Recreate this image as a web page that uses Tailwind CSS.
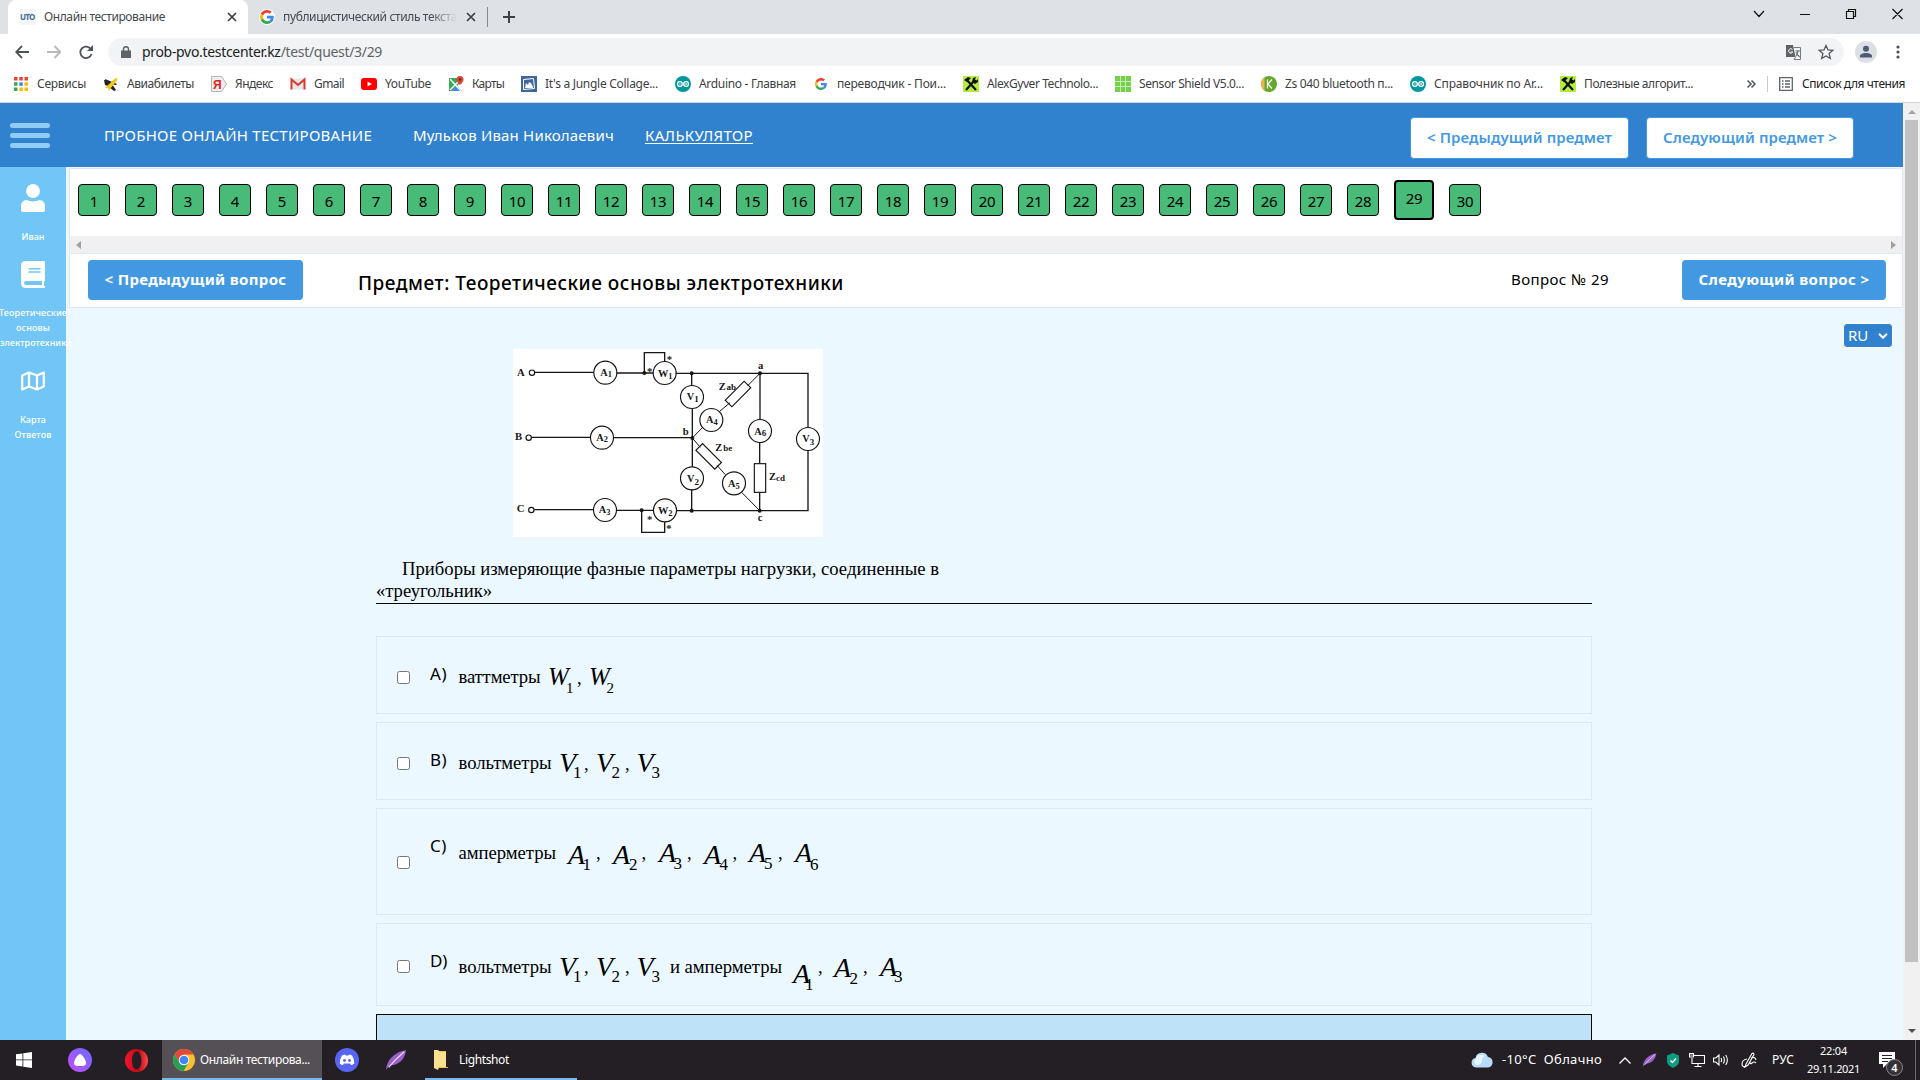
<!DOCTYPE html>
<html lang="ru">
<head>
<meta charset="utf-8">
<title>Онлайн тестирование</title>
<script src="https://cdn.jsdelivr.net/npm/@tailwindcss/browser@4"></script>
</head>
<body class="flex h-[1080px] w-[1920px] flex-col overflow-hidden bg-white font-['Noto_Sans','Open_Sans',sans-serif] text-black">

<svg class="hidden">
  <symbol id="apps" viewBox="0 0 16 16"><g fill="#ea4335"><path d="M1 1h3.500v3.500H1zM6.300 1h3.500v3.500H6.300zM11.500 1H15v3.500h-3.500z"/></g><path fill="#34a853" d="M1 6.300h3.500v3.500H1zM1 11.500h3.500V15H1z"/><path fill="#4285f4" d="M6.300 6.300h3.500v3.500H6.300z"/><path fill="#fbbc05" d="M11.500 6.300H15v3.500h-3.500zM6.300 11.500h3.500V15H6.300zM11.500 11.500H15V15h-3.500z"/></symbol>
  <symbol id="plane" viewBox="0 0 16 16"><path fill="#222" d="M1 4l4 .5L8 7l-3 3-3-1zM9 8l4 6-2 1-5-4z"/><path fill="#222" d="M2 3l12 5-1 1L3 7z"/><path fill="#f5c518" d="M4 10L12 2.500l2.500-.5-.5 2.500L7 13l-2 2 .5-3L2 12z"/></symbol>
  <symbol id="yandex" viewBox="0 0 16 16"><path fill="#eee" stroke="#b5b5b5" d="M.5.5h10L15.500 8l-5 7.500H.5z"/><text x="2" y="12.500" font-size="12" font-weight="bold" font-family="Liberation Sans" fill="#e0201b">Я</text></symbol>
  <symbol id="gmail" viewBox="0 0 16 16"><path fill="#e8e8e8" d="M1 2.500h14v11H1z"/><path fill="none" stroke="#d93a2f" stroke-width="2" d="M1.500 13.500v-10L8 9l6.500-5.500v10"/></symbol>
  <symbol id="youtube" viewBox="0 0 16 16"><rect y="2" width="16" height="12" rx="3" fill="#f00"/><path fill="#fff" d="M6.500 5.500v5L11 8z"/></symbol>
  <symbol id="maps" viewBox="0 0 16 16"><path fill="#34a853" d="M1 2h10v6L4 15H1z"/><path fill="#4285f4" d="M9 9l5 6H4z"/><path stroke="#fff" stroke-width="1.500" d="M2 3l11 12M2 14L11 5"/><path fill="#db4437" d="M12 0a3.500 3.500 0 0 1 3.500 3.500C15.500 6 12 9 12 9S8.500 6 8.500 3.500A3.500 3.500 0 0 1 12 0"/><circle cx="12" cy="3.500" r="1.200" fill="#7b1d14"/></symbol>
  <symbol id="jungle" viewBox="0 0 16 16"><path fill="#3d679c" d="M0 0h16v16H0z"/><path fill="none" stroke="#fff" d="M2.500 3.500l10-1 1 10-11 1z"/><path fill="#fff" d="M4 12l1-5 2 2 1-3 2 1 2 4v1z"/></symbol>
  <symbol id="arduino" viewBox="0 0 16 16"><circle cx="8" cy="8" r="8" fill="#00979d"/><g fill="none" stroke="#fff" stroke-width="1.300"><circle cx="4.900" cy="8" r="2.400"/><circle cx="11.100" cy="8" r="2.400"/></g><path stroke="#fff" stroke-width=".7" d="M4 8h1.800M10.200 8H12M11.100 7v2"/></symbol>
  <symbol id="google" viewBox="0 0 48 48"><path fill="#EA4335" d="M24 9.500c3.540 0 6.710 1.220 9.210 3.600l6.850-6.850C35.900 2.380 30.470 0 24 0 14.620 0 6.510 5.380 2.560 13.220l7.980 6.190C12.430 13.720 17.740 9.500 24 9.500z"/><path fill="#4285F4" d="M46.980 24.550c0-1.570-.15-3.090-.38-4.550H24v9.020h12.940c-.58 2.960-2.260 5.480-4.780 7.180l7.730 6c4.510-4.180 7.090-10.360 7.090-17.650z"/><path fill="#FBBC05" d="M10.530 28.590c-.48-1.450-.76-2.990-.76-4.590s.27-3.140.76-4.590l-7.980-6.190C.92 16.460 0 20.120 0 24s.92 7.540 2.560 10.780l7.970-6.190z"/><path fill="#34A853" d="M24 48c6.480 0 11.930-2.130 15.890-5.810l-7.730-6c-2.150 1.450-4.920 2.300-8.160 2.300-6.260 0-11.570-4.220-13.470-9.910l-7.980 6.190C6.510 42.620 14.620 48 24 48z"/></symbol>
  <symbol id="tools" viewBox="0 0 16 16"><path fill="#b4ee3c" d="M0 0h16v16H0z"/><path fill="none" stroke="#111" stroke-width="2.200" d="M3 14l8-9M3 3l10 11"/><path fill="#111" d="M1 4l4-3 3 1-4 4zM10 2l3-1-1 2.500 1.500 1L15 3v3l-3 2-3-2z"/></symbol>
  <symbol id="grid" viewBox="0 0 16 16"><path fill="#76cf4d" d="M0 0h16v16H0z"/><path stroke="#c8edb6" d="M5.500 0v16M10.500 0v16M0 5.500h16M0 10.500h16"/></symbol>
  <symbol id="kbadge" viewBox="0 0 16 16"><circle cx="8" cy="8" r="8" fill="#66a82c"/><path fill="#f1b24a" d="M3.500 1.500a8 8 0 0 0 0 13z"/><path fill="none" stroke="#fff" stroke-width="1.200" d="M6.500 3.500v9M11 3.500l-4 4.500 4 4.500"/></symbol>
  <symbol id="feather" viewBox="0 0 24 24"><path fill="#9a62c8" d="M1 23c1-8 4-13 10-17 4-3 8-4 12-5-1 6-3 11-8 14-4 3-8 2-11 4z"/><path fill="none" stroke="#ecd8f8" stroke-width="1.300" d="M4 20C9 14 14 9 21 3"/></symbol>
</svg>

<!-- tab strip -->
<div class="flex h-[34px] shrink-0 bg-[#dee1e6] pl-2 text-[12px] text-[#45494d]">
  <div class="flex w-60 items-center rounded-t-lg bg-white pr-[11px] pl-3">
    <div class="flex h-4 w-4 items-center bg-[#f5f5f7]"><span class="text-[8px] leading-none font-bold tracking-[-0.8px] text-[#3f6f9a]">UTO</span></div>
    <span class="ml-2 whitespace-nowrap leading-4" data-fit="121">Онлайн тестирование</span>
    <svg class="ml-auto h-2.5 w-2.5" viewBox="0 0 10 10" stroke="#3c4043" stroke-width="1.700"><path d="M1 1l8 8M9 1l-8 8"/></svg>
  </div>
  <div class="flex w-[239px] items-center pr-[11px] pl-[11px]">
    <span class="flex h-4 w-4 items-center justify-center rounded-full bg-white"><svg class="h-3.5 w-3.5"><use href="#google"/></svg></span>
    <span class="ml-2 w-[174px] overflow-hidden mask-r-from-85% leading-4 whitespace-nowrap"><span data-fit="174">публицистический стиль текста</span></span>
    <svg class="ml-auto h-2.5 w-2.5" viewBox="0 0 10 10" stroke="#3c4043" stroke-width="1.700"><path d="M1 1l8 8M9 1l-8 8"/></svg>
  </div>
  <div class="mt-[7px] h-5 w-px bg-[#85888c]"></div>
  <svg class="mt-[11px] ml-[15px] h-3 w-3" viewBox="0 0 12 12" stroke="#3c4043" stroke-width="2"><path d="M6 0v12M0 6h12"/></svg>
  <svg class="mt-2 mr-[17px] ml-auto h-3 w-[150px]" viewBox="0 0 150 12" fill="none" stroke="#111" stroke-width="1.200"><path d="M1 3l5 5.500L11 3M47 6.500h10M93.500 3.500h7v7h-7zM95.500 3.500v-2h7v7h-2M139.500 1l10 10M149.500 1l-10 10"/></svg>
</div>

<!-- toolbar -->
<div class="flex h-9 shrink-0 items-center pl-[15px]">
  <svg class="h-[14px] w-[80px]" viewBox="0 0 80 14" fill="none" stroke-width="1.800"><path stroke="#4f5358" d="M14 7H1.500M7 1L1.200 7 7 13"/><path stroke="#b6b8bb" d="M32 7h13M39.500 1l5.800 6-5.800 6"/><path stroke="#4f5358" d="M76 4.500A5.700 5.700 0 1 0 76.500 9"/><path fill="#4f5358" stroke="none" d="M78 0v6h-6z"/></svg>
  <div class="ml-[13px] flex h-7 w-[1736px] items-center rounded-full bg-[#f1f3f4] pr-[10px] pl-[13px]">
    <svg class="h-3 w-[10px]" viewBox="0 0 10 12"><path fill="#5f6368" d="M0 4.500h10V12H0z"/><path fill="none" stroke="#5f6368" stroke-width="1.500" d="M2.500 5V3a2.500 2.300 0 0 1 5 0v2"/></svg>
    <span class="ml-[11px] text-[14px] leading-5 whitespace-nowrap text-[#202124]" data-fit="240">prob-pvo.testcenter.kz<span class="text-[#5f6368]">/test/quest/3/29</span></span>
    <svg class="ml-auto h-[15px] w-[15px]" viewBox="0 0 15 15"><path fill="#5f6368" d="M0 0h7l2.500 12H0z"/><path fill="none" stroke="#777b80" d="M8 2.500h6.500v12H8l2-3"/><path stroke="#777b80" d="M9.500 6H14M12 5c0 3-1 5-2 6M10 7c1 3 2 4 4 5"/><path fill="none" stroke="#fff" d="M6.500 4.500a2.200 2.200 0 1 0 .3 2.500H4.500"/></svg>
    <svg class="ml-[17px] h-4 w-4" viewBox="0 0 16 16" fill="none" stroke="#55595e" stroke-width="1.300"><path d="M8 1.500l2 4.500 4.800.4-3.700 3.200 1.200 4.900L8 11.900l-4.300 2.600 1.200-4.900L1.200 6.400 6 6z"/></svg>
  </div>
  <svg class="ml-[11px] h-[22px] w-[22px]" viewBox="0 0 22 22"><circle cx="11" cy="11" r="11" fill="#dcdfe4"/><circle cx="11" cy="7.700" r="3" fill="#4c5b76"/><path fill="#4c5b76" d="M5 16.500v-1.500c0-2 3-3 6-3s6 1 6 3v1.500z"/></svg>
  <svg class="ml-[19px] h-[14px] w-1" viewBox="0 0 4 14" fill="#4f5358"><circle cx="2" cy="2" r="1.600"/><circle cx="2" cy="7" r="1.600"/><circle cx="2" cy="12" r="1.600"/></svg>
</div>

<!-- bookmarks -->
<div class="flex h-[33px] shrink-0 items-center border-b border-[#d5d8dc] pr-[15px] pb-1 pl-[13px] text-[12px] text-[#3c4043]">
  <div id="bookmarks" class="flex items-center gap-[17px]"></div>
  <svg class="ml-auto h-2 w-[9px]" viewBox="0 0 9 8" fill="none" stroke="#4f5358" stroke-width="1.500"><path d="M.5.5L4 4 .5 7.500M4.500.5L8 4 4.500 7.500"/></svg>
  <div class="mx-[11px] h-4 w-px bg-[#c8cbd0]"></div>
  <svg class="h-[14px] w-[14px]" viewBox="0 0 14 14" fill="none" stroke="#5f6368" stroke-width="1.300"><path d="M.7.7h12.600v12.600H.7zM3 4h1.500M3 7h1.500M3 10h1.500M6 4h5M6 7h5M6 10h5"/></svg>
  <span class="ml-[9px] whitespace-nowrap text-[#202124]" data-fit="103">Список для чтения</span>
</div>

<!-- page -->
<div class="flex h-[937px] shrink-0">
  <div class="flex w-[1903px] flex-col bg-[#ebf8ff]">
    <header class="flex h-16 shrink-0 items-center bg-[#3182ce] pr-[49px] pl-[10px] text-[16px] text-white">
      <div class="flex w-10 flex-col gap-[5px]">
        <div class="h-[5px] rounded-sm bg-[#90cdf4]"></div><div class="h-[5px] rounded-sm bg-[#90cdf4]"></div><div class="h-[5px] rounded-sm bg-[#90cdf4]"></div>
      </div>
      <span class="ml-[54px] w-[268px] text-[15px] whitespace-nowrap" data-fit="268">ПРОБНОЕ ОНЛАЙН ТЕСТИРОВАНИЕ</span>
      <span class="ml-[41px] w-[201px] text-[15px] whitespace-nowrap" data-fit="201">Мульков Иван Николаевич</span>
      <a class="ml-[31px] w-[108px] text-[15px] whitespace-nowrap underline underline-offset-2" data-fit="108">КАЛЬКУЛЯТОР</a>
      <button class="mt-[5px] ml-auto flex h-[42px] w-[219px] items-center justify-center rounded border border-[#4299e1] bg-white text-[15px] font-semibold text-[#4299e1]"><span class="whitespace-nowrap" data-fit="185">&lt; Предыдущий предмет</span></button>
      <button class="mt-[5px] ml-[17px] flex h-[42px] w-[208px] items-center justify-center rounded border border-[#4299e1] bg-white text-[15px] font-semibold text-[#4299e1]"><span class="whitespace-nowrap" data-fit="174">Следующий предмет &gt;</span></button>
    </header>

    <div class="flex min-h-0 flex-1">
      <aside class="z-10 flex w-[66px] shrink-0 flex-col items-center bg-[#71c6f7] pt-[17px] text-center text-[9px] leading-[15px] font-medium text-white">
        <svg class="h-7 w-6" viewBox="0 0 24 28" fill="#fff"><circle cx="12" cy="7" r="6.900"/><path d="M6 16c2 1 3.500 1.400 6 1.400s4-.4 6-1.400c4 0 6 3 6 6v4q0 2-2 2H2q-2 0-2-2v-4c0-3 2-6 6-6z"/></svg>
        <span class="mt-[17px]" data-fit="23">Иван</span>
        <svg class="mt-[17px] h-[27px] w-6" viewBox="0 0 24 27"><path fill="#fff" d="M5 0h18q1 0 1 1v18q0 1-1 1.500v4.500q1 0 1 1 0 1-1 1H5q-5 0-5-5V5q0-5 5-5z"/><path fill="#71c6f7" d="M5 20h16v4H5q-2 0-2-2t2-2zM7.500 7h12v1.400h-12zM7.500 10.300h12v1.400h-12z"/></svg>
        <span class="mt-[17px] flex flex-col items-center whitespace-nowrap"><span data-fit="68">Теоретические</span><span data-fit="34">основы</span><span data-fit="72" class="ml-[6px]">электротехники</span></span>
        <svg class="mt-[21px] h-5 w-6" viewBox="0 0 24 20" fill="none" stroke="#fff" stroke-width="2.200" stroke-linejoin="round"><path d="M1.200 4.500L8 1.500l8 3 6.800-3v14L16 18.500l-8-3-6.800 3zM8 1.500v14M16 4.500v14"/></svg>
        <span class="mt-[21px]" data-fit="26">Карта</span><span data-fit="37">Ответов</span>
      </aside>

      <main class="flex min-w-0 flex-1 flex-col pt-px pl-[3px]">
        <section class="flex h-[140px] shrink-0 flex-col border border-[#dfe5f2] bg-white">
          <nav id="questions" class="flex h-[67px] items-center gap-[15px] pb-[5px] pl-2 text-[15px]"></nav>
          <div class="flex h-[18px] shrink-0 items-center justify-between border-b border-[#e2e8f0] bg-[#f0f0f0] px-[6px]">
            <svg class="h-2 w-[5px]" viewBox="0 0 5 8" fill="#a0a0a0"><path d="M5 0v8L0 4z"/></svg><svg class="h-2 w-[5px]" viewBox="0 0 5 8" fill="#a0a0a0"><path d="M0 0v8l5-4z"/></svg>
          </div>
          <div class="flex h-[53px] items-center pr-4 pb-0.5 pl-[18px] text-[15px]">
            <button class="flex h-10 w-[215px] items-center justify-center rounded bg-[#4299e1] font-bold text-white"><span class="whitespace-nowrap" data-fit="182">&lt; Предыдущий вопрос</span></button>
            <h1 class="mt-[8px] ml-[55px] text-[19px] font-medium whitespace-nowrap" data-fit="486">Предмет: Теоретические основы электротехники</h1>
            <span class="ml-auto whitespace-nowrap" data-fit="98">Вопрос № 29</span>
            <button class="ml-[73px] flex h-10 w-[204px] items-center justify-center rounded bg-[#4299e1] font-bold text-white"><span class="whitespace-nowrap" data-fit="171">Следующий вопрос &gt;</span></button>
          </div>
        </section>

        <div class="relative min-h-0 flex-1 overflow-hidden pt-[41px] pr-[311px] pl-[307px]">
          <div class="absolute top-[15px] right-[10px] flex h-[25px] w-[50px] items-center rounded border border-white bg-[#3182ce] pl-1 text-[15px] text-white"><span data-fit="20">RU</span><svg class="ml-[10px] h-[6px] w-2.5" viewBox="0 0 10 6" fill="none" stroke="#fff" stroke-width="2"><path d="M1 .8l4 4 4-4"/></svg></div>

          <svg class="ml-[137px] h-[188px] w-[310px] bg-white" viewBox="39 27 930 564" fill="none" stroke="#161616" stroke-width="4" font-family="Liberation Serif">
            <path d="M104 97H281M350 99H460M527 100H924V262M924 331V512H528M94 292H272M341 293H577M103 509H280M349 511H460M433 97V38H494V65M425 511V577H494V546M575 100V137M577 206V380M575 449V512M780 100V239M779 307V370M779 457V512"/>
            <path stroke-width="3" d="M780 100L744 136M690 188L658 215M608 262L577 294L601 322M651 376L676 404M725 457L779 512"/>
            <g stroke-width="3.500"><rect x="763" y="371" width="34" height="86"/><rect x="674" y="148" width="80" height="28" transform="rotate(-45 714 162)"/><rect x="586" y="335" width="80" height="28" transform="rotate(45 626 349)"/></g>
            <g stroke-width="3.500"><circle cx="316" cy="98" r="34.500"/><circle cx="494" cy="99" r="34.500"/><circle cx="576" cy="171" r="34.500"/><circle cx="634" cy="240" r="34.500"/><circle cx="306" cy="293" r="34.500"/><circle cx="780" cy="273" r="34.500"/><circle cx="924" cy="297" r="34.500"/><circle cx="576" cy="415" r="34.500"/><circle cx="702" cy="430" r="34.500"/><circle cx="315" cy="510" r="34.500"/><circle cx="495" cy="511" r="34.500"/><circle cx="96" cy="98" r="8"/><circle cx="86" cy="293" r="8"/><circle cx="94" cy="510" r="8"/></g>
            <g fill="#161616" stroke="none"><circle cx="433" cy="99" r="6"/><circle cx="575" cy="100" r="6"/><circle cx="780" cy="100" r="6"/><circle cx="577" cy="294" r="6"/><circle cx="425" cy="511" r="6"/><circle cx="575" cy="512" r="6"/><circle cx="779" cy="512" r="6"/>
              <g font-size="32" font-weight="bold"><text x="51" y="107">A</text><text x="45" y="301">B</text><text x="50" y="517">C</text><text x="548" y="284">b</text><text x="774" y="87">a</text><text x="773" y="543">c</text></g>
              <g font-size="31" font-weight="bold"><text x="301" y="107">A<tspan font-size="25" dy="4">1</tspan></text><text x="289" y="303">A<tspan font-size="25" dy="4">2</tspan></text><text x="296" y="519">A<tspan font-size="25" dy="5">3</tspan></text><text x="618" y="249">A<tspan font-size="25" dy="5">4</tspan></text><text x="684" y="441">A<tspan font-size="25" dy="5">5</tspan></text><text x="763" y="284">A<tspan font-size="27" dy="4">6</tspan></text><text x="474" y="110">W<tspan font-size="25" dy="6">1</tspan></text><text x="474" y="522">W<tspan font-size="25" dy="6">2</tspan></text><text x="560" y="181">V<tspan font-size="27" dy="6">1</tspan></text><text x="561" y="426">V<tspan font-size="27" dy="8">2</tspan></text><text x="907" y="307">V<tspan font-size="27" dy="8">3</tspan></text>
              <text x="656" y="150">Z<tspan font-size="27" dx="3">ab</tspan></text><text x="646" y="333">Z<tspan font-size="27" dx="3">be</tspan></text><text x="807" y="420">Z<tspan font-size="27" dy="4">cd</tspan></text>
              <text x="441" y="105" font-size="32">*</text><text x="500" y="70" font-size="32">*</text><text x="441" y="549" font-size="32">*</text><text x="499" y="577" font-size="32">*</text></g></g>
          </svg>

          <div class="mt-[21px] h-[46px] border-b border-black font-['Liberation_Serif',serif] text-[18.7px] leading-[22px] whitespace-nowrap">
            <div class="pl-[26px]"><span data-fit="537">Приборы измеряющие фазные параметры нагрузки, соединенные в</span></div>
            <div><span data-fit="116">«треугольник»</span></div>
          </div>

          <div id="answers" class="mt-8 flex flex-col gap-2"></div>
          <div class="mt-2 h-[60px] border border-black bg-[#bee3f8]"></div>
        </div>
      </main>
    </div>
  </div>

  <div class="flex w-[17px] flex-col items-center bg-[#f1f1f1]">
    <svg class="mt-[7px] h-[4px] w-2" viewBox="0 0 8 4" fill="#a3a3a3"><path d="M0 4h8L4 0z"/></svg>
    <div class="mt-[6px] h-[842px] w-[13px] bg-[#c1c1c1]"></div>
    <svg class="mt-auto mb-[7px] h-[4px] w-2" viewBox="0 0 8 4" fill="#505050"><path d="M0 0h8L4 4z"/></svg>
  </div>
</div>

<!-- taskbar -->
<footer class="flex h-10 shrink-0 items-center bg-[#231f24] text-[12px] text-white">
  <svg class="ml-4 h-4 w-4" viewBox="0 0 16 16" fill="#fff"><path d="M0 2.300l6.500-.9v6.100H0zM7.300 1.300L16 0v7.500H7.300zM0 8.300h6.500v6.200L0 13.600zM7.300 8.300H16V16l-8.700-1.300z"/></svg>
  <svg class="ml-9 h-6 w-6" viewBox="0 0 24 24"><defs><linearGradient id="al" x1="0" y1="1" x2="1" y2="0"><stop stop-color="#c44df5"/><stop offset="1" stop-color="#6a6cff"/></linearGradient></defs><circle cx="12" cy="12" r="12" fill="url(#al)"/><path fill="#fff" d="M12 6c2 0 6 6 6 9s-3 3-6 3-6 0-6-3 4-9 6-9z"/></svg>
  <svg class="ml-[33px] h-[23px] w-[23px]" viewBox="0 0 23 23"><defs><linearGradient id="op" x2="1"><stop stop-color="#f7142b"/><stop offset=".6" stop-color="#c00714"/><stop offset="1" stop-color="#ff4b4b"/></linearGradient></defs><path fill="url(#op)" fill-rule="evenodd" d="M11.500 0a11.500 11.500 0 1 1 0 23 11.500 11.500 0 0 1 0-23zm0 2.500C8.500 2.500 7 7 7 11.500s1.500 9 4.500 9 5-4.500 5-9-2-9-5-9z"/></svg>
  <div class="ml-[14px] flex h-10 w-40 items-center border-b-2 border-[#76b9ed] bg-[#545055] pt-0.5 pl-[11px]">
    <svg class="h-[22px] w-[22px]" viewBox="0 0 22 22"><circle cx="11" cy="11" r="11" fill="#fbc02d"/><path fill="#e0483a" d="M1.500 5.500A11 11 0 0 1 20.500 5.500H11L6.200 14z"/><path fill="#23a058" d="M1.500 5.500A11 11 0 0 0 10.500 22L15.700 13.500 11 16 6.500 14z"/><circle cx="11" cy="11" r="5.300" fill="#fff"/><circle cx="11" cy="11" r="4.300" fill="#4285f4"/></svg>
    <span class="ml-[5px] whitespace-nowrap" data-fit="110">Онлайн тестирова...</span>
  </div>
  <svg class="ml-[13px] h-6 w-6" viewBox="0 0 24 24"><circle cx="12" cy="12" r="12" fill="#5865f2"/><path fill="#fff" d="M7 7.500q2-1 3-1l.5 1h3l.5-1q1 0 3 1 2.500 3.500 2.300 8-2 1.500-3.300 1.500l-.8-1.500H8.800L8 17q-1.300 0-3.300-1.500Q4.500 11 7 7.500z"/><circle cx="9.500" cy="12.500" r="1.400" fill="#5865f2"/><circle cx="14.500" cy="12.500" r="1.400" fill="#5865f2"/></svg>
  <svg class="ml-[26px] h-6 w-[22px]"><use href="#feather"/></svg>
  <div class="ml-[18px] flex h-10 w-[152px] items-center border-b-2 border-[#76b9ed] pt-0.5 pl-[9px]">
    <svg class="h-5 w-[15px]" viewBox="0 0 15 20"><path fill="#e9bf57" d="M1 1h11v16h2v1H4z"/><path fill="#fbe08f" d="M0 0h4l2 2h6v15H5l-1 3-4-2z"/></svg>
    <span class="ml-[10px]" data-fit="50">Lightshot</span>
  </div>
  <svg class="ml-auto h-4 w-[22px]" viewBox="0 0 22 16"><path fill="#b9dcfb" d="M5 15.500a4.800 4.800 0 0 1-.5-9.500A6.500 6.500 0 0 1 17 5a5.300 5.300 0 0 1 0 10.500z"/><path fill="#e9f5ff" d="M5 13a3.500 3.500 0 0 1 0-6 5.500 5.500 0 0 1 9-3c-3 1-3 3-3 5s-2 4-6 4z"/></svg>
  <span class="ml-[9px] text-[13px] whitespace-pre" data-fit="100">-10°C  Облачно</span>
  <svg class="ml-[17px] h-[7px] w-3" viewBox="0 0 12 7" fill="none" stroke="#fff" stroke-width="1.300"><path d="M.5 6.500L6 1l5.500 5.500"/></svg>
  <svg class="ml-[11px] h-4 w-[15px]"><use href="#feather"/></svg>
  <svg class="ml-[10px] h-[15px] w-3" viewBox="0 0 12 15"><path fill="#0e9b80" d="M6 0l6 2.500v6Q12 12 6 15 0 12 0 8.500v-6z"/><path fill="none" stroke="#fff" stroke-width="1.300" d="M3.500 7.500l2 2 3.500-4"/></svg>
  <svg class="ml-[10px] h-[14px] w-4" viewBox="0 0 16 14" fill="none" stroke="#fff" stroke-width="1.100"><path d="M5 2.500h10.500v8H3V5M9 10.500v3M5.500 13.500h7M.5.500h4V4h-4zM1.500 2h2"/></svg>
  <svg class="ml-2 h-[14px] w-4" viewBox="0 0 16 14" fill="none" stroke="#fff" stroke-width="1.100"><path d="M.5 5v4h2.300L6 12V2L2.800 5zM8 5q1.200 2 0 4M10.300 3.500q2.200 3.500 0 7M12.700 2q3.300 5 0 10"/></svg>
  <svg class="ml-3 h-4 w-4" viewBox="0 0 16 16" fill="none" stroke="#fff" stroke-width="1.100"><path d="M5 12L11 1.500q2-1 2 1L7 13l-3 2zM6 7Q1 8 1 12t5 2M9 10q0 3 2 1t4 0M10 6q4-2 5 2"/></svg>
  <span class="ml-[15px]" data-fit="22">РУС</span>
  <div class="ml-[13px] flex w-[53px] flex-col items-center text-[11px] leading-[18px]"><span data-fit="27">22:04</span><span data-fit="53">29.11.2021</span></div>
  <div class="relative ml-[19px] h-4 w-[17px]">
    <svg class="h-4 w-[17px]" viewBox="0 0 17 16"><path fill="#fff" d="M0 0h16v12H8l-4 4v-4H0z"/><path stroke="#231f24" stroke-width="1.200" d="M3 3.500h10M3 6.500h10M3 9.500h6"/></svg>
    <span class="absolute top-[7px] left-[7px] flex h-[17px] w-[17px] items-center justify-center rounded-full border border-[#8a888b] bg-[#343136] text-[11px] leading-none font-semibold">4</span>
  </div>
  <div class="mr-1 ml-[19px] h-10 w-px bg-[#6b696c]"></div>
</footer>

<script>
const bookmarks = [
  ['apps', 'Сервисы', 49], ['plane', 'Авиабилеты', 67], ['yandex', 'Яндекс', 38], ['gmail', 'Gmail', 30],
  ['youtube', 'YouTube', 46], ['maps', 'Карты', 32], ['jungle', "It's a Jungle Collage...", 113],
  ['arduino', 'Arduino - Главная', 97], ['google', 'переводчик - Пои...', 109], ['tools', 'AlexGyver Technolo...', 111],
  ['grid', 'Sensor Shield V5.0...', 105], ['kbadge', 'Zs 040 bluetooth п...', 108],
  ['arduino', 'Справочник по Ar...', 109], ['tools', 'Полезные алгорит...', 109],
];
document.getElementById('bookmarks').innerHTML = bookmarks.map(([icon, label, w]) => `
  <a class="flex items-center gap-2 whitespace-nowrap"><svg class="h-4 w-4 shrink-0 ${icon === 'google' ? 'p-0.5' : ''}"><use href="#${icon}"/></svg><span data-fit="${w}">${label}</span></a>`).join('');

document.getElementById('questions').innerHTML = Array.from({ length: 30 }, (_, i) => i + 1).map(n => n === 29
  ? `<a class="flex h-10 w-10 shrink-0 items-start justify-center rounded border-2 border-black bg-[#48bb78] pt-[5px] tracking-[-0.3px]">${n}</a>`
  : `<a class="flex h-8 w-8 shrink-0 items-center justify-center rounded border border-black bg-[#48bb78] pt-0.5 tracking-[-0.3px]">${n}</a>`).join('');

// Glyph runs of a formula: [text, x, baseline, kind], relative to the answer card
const answers = [
  { key: 'A', card: 'h-[78px]', box: 'mt-[34px]', label: 'mt-[25px]', runs: [['ваттметры', 82.5, 47, 82], ['W', 172, 49, 'w'], ['1', 190, 57, 's'], [',', 201, 48, 'c'], ['W', 213, 49, 'w'], ['2', 230.5, 57, 's']] },
  { key: 'B', card: 'h-[78px]', box: 'mt-[34px]', label: 'mt-[25px]', runs: [['вольтметры', 82.5, 47, 93], ['V', 183, 50, 'v'], ['1', 197, 56, 'm'], [',', 208, 48, 'c'], ['V', 220, 50, 'v'], ['2', 235.500, 56, 'm'], [',', 249, 48, 'c'], ['V', 260.500, 50, 'v'], ['3', 275.500, 56, 'm']] },
  { key: 'C', card: 'h-[107px]', box: 'mt-[47px]', label: 'mt-[25px]', runs: [['амперметры', 82.5, 51, 97.500], ['A', 192, 55.500, 'v'], ['1', 206.500, 62, 'm'], [',', 220, 51, 'c'], ['A', 237, 55.500, 'v'], ['2', 253, 62, 'm'], [',', 265.500, 51, 'c'], ['A', 283, 54, 'v'], ['3', 297.500, 61, 'm'], [',', 311, 51, 'c'], ['A', 328, 55.500, 'v'], ['4', 343.500, 62, 'm'], [',', 356.500, 51, 'c'], ['A', 373, 54, 'v'], ['5', 388, 61, 'm'], [',', 402, 51, 'c'], ['A', 419, 54, 'v'], ['6', 434, 61.500, 'm']] },
  { key: 'D', card: 'h-[83px]', box: 'mt-[36px]', label: 'mt-[25px]', runs: [['вольтметры', 82.5, 50, 93], ['V', 183, 53, 'v'], ['1', 197, 59, 'm'], [',', 208, 50, 'c'], ['V', 220, 53, 'v'], ['2', 235.500, 59, 'm'], [',', 249, 50, 'c'], ['V', 260.500, 53, 'v'], ['3', 275.500, 59, 'm'], ['и амперметры', 294, 50, 112], ['A', 417, 59.500, 'v'], ['1', 429, 67, 'm'], [',', 442, 50, 'c'], ['A', 458, 54, 'v'], ['2', 473.500, 61, 'm'], [',', 487, 50, 'c'], ['A', 504, 53, 'v'], ['3', 518, 59, 'm']] },
];
const glyph = { w: 'text-[25px] italic', v: 'text-[28px] italic', s: 'text-[15px]', m: 'text-[17px]', c: 'text-[18.7px]' };
document.getElementById('answers').innerHTML = answers.map(a => `
  <label class="relative flex ${a.card} border border-[#dfe7f1] pl-[20px]">
    <input type="checkbox" class="${a.box} h-[13px] w-[13px] shrink-0">
    <span class="${a.label} ml-[20px] text-[17px] leading-6" data-fit="17">${a.key})</span>
    <svg class="absolute inset-0 h-full w-full font-['Liberation_Serif',serif]" fill="#000">${a.runs.map(([t, x, y, k]) => typeof k === 'number'
      ? `<text class="text-[18.7px]" x="${x - 1}" y="${y - 1}" textLength="${k}">${t}</text>`
      : `<text class="${glyph[k]}" x="${x - 1}" y="${y - 1}">${t}</text>`).join('')}</svg>
  </label>`).join('');

// Spread the letters of each label over its nominal width; repeated whenever the styles change the page
function fitLabels() {
  document.querySelectorAll('[data-fit]').forEach(el => {
    el.style.letterSpacing = '0px';
    const range = document.createRange();
    range.selectNodeContents(el);
    const gap = (Number(el.dataset.fit) - range.getBoundingClientRect().width) / el.textContent.length;
    el.style.letterSpacing = gap.toFixed(3) + 'px';
  });
}
fitLabels();
new ResizeObserver(fitLabels).observe(document.body);
new MutationObserver(fitLabels).observe(document.head, { childList: true, subtree: true });
window.addEventListener('load', () => { fitLabels(); requestAnimationFrame(fitLabels); setTimeout(fitLabels, 60); });
</script>
</body>
</html>
